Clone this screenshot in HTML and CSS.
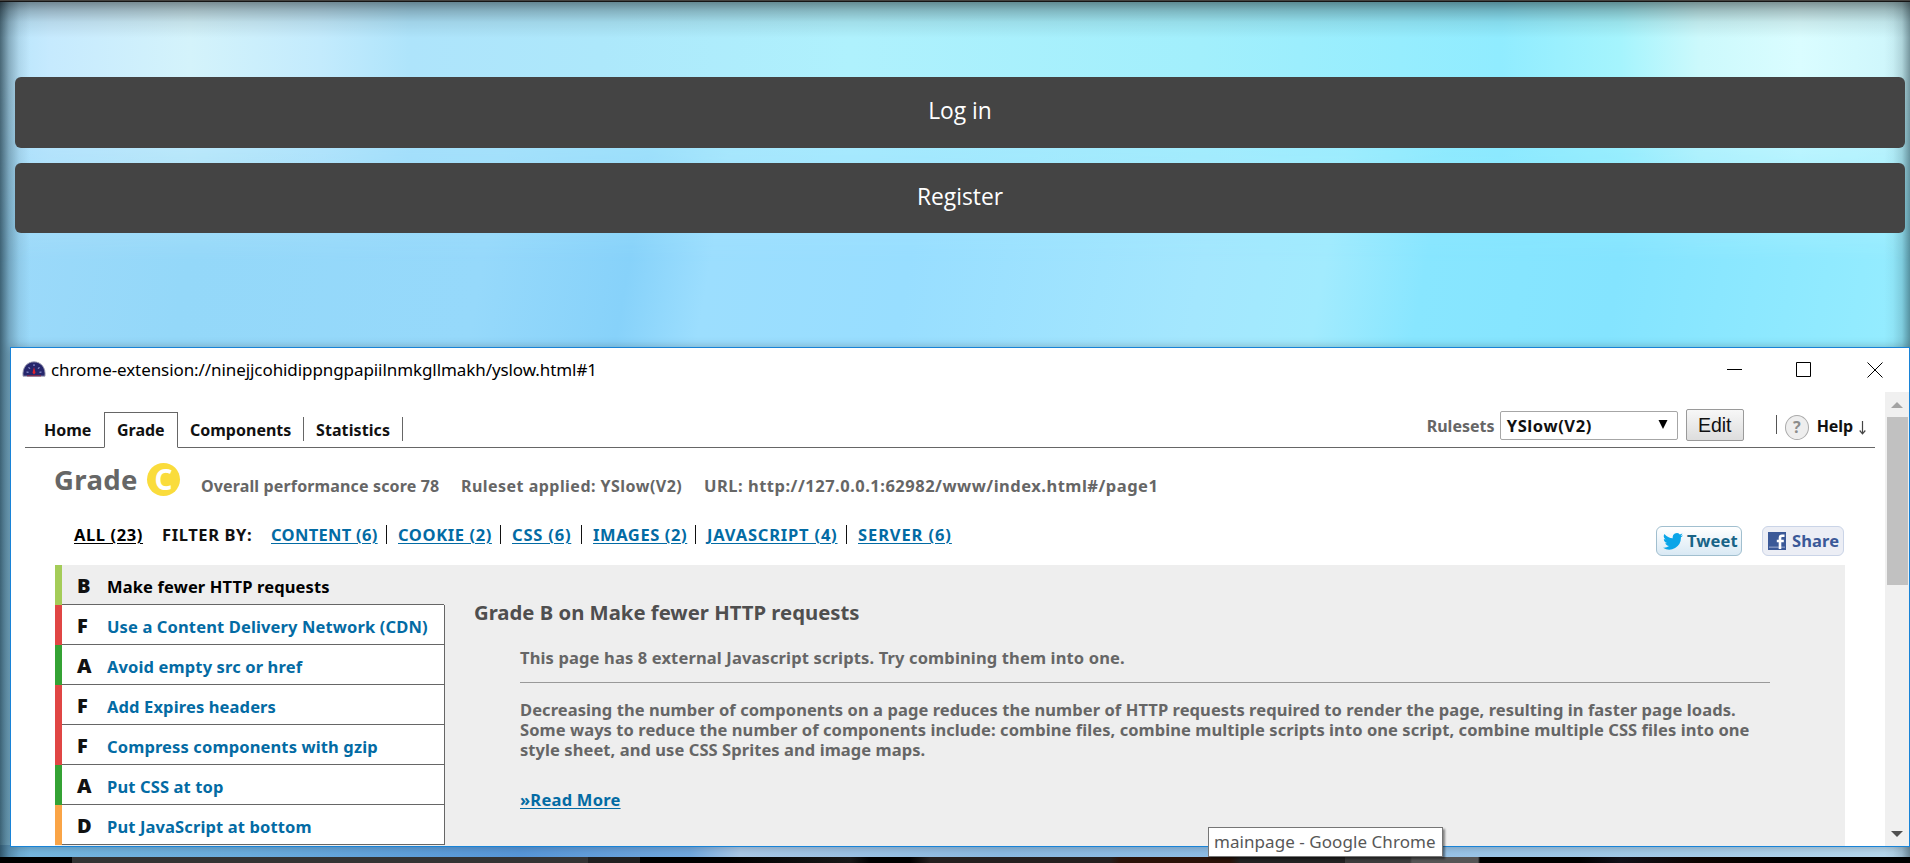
FILE: index.html
```
<!DOCTYPE html>
<html lang="en">
<head>
<meta charset="utf-8">
<title>mainpage</title>
<link rel="stylesheet" href="styles.css">
</head>
<body>
<div class="top-edge"></div>
<main class="app">
  <button class="app-btn">Log in</button>
  <button class="app-btn app-btn-second">Register</button>
</main>
<footer class="taskbar"></footer>

<section class="window">
  <header class="titlebar">
    <svg class="favicon" width="24" height="16" viewBox="0 0 24 19" preserveAspectRatio="none">
      <path d="M1 18C0 8 5 1 12 1s12 7 11 17Z" fill="#26266c" stroke="#a3a3b5" stroke-width="1"/>
      <path d="M4.500 13l2 .5M6.500 7.500l1.500 1.500M12 4v2M17.500 7.500L16 9M19.500 13l-2 .5" stroke="#8f93cf" stroke-width="1.300"/>
      <path d="M12 7l1.500 7-1.500 2-1.500-2Z" fill="#e0202c"/>
      <path d="M5 17.500h14" stroke="#7a2a4d" stroke-width="1.500"/>
    </svg>
    <span class="title">chrome-extension://ninejjcohidippngpapiilnmkgllmakh/yslow.html#1</span>
    <svg class="win-controls" width="156" height="16" viewBox="0 0 156 16" fill="none" stroke="#000" stroke-width="1">
      <path d="M0 7.500h15" /><path d="M69.500.5h14v14h-14Z"/><path d="M140.500.5l15 15M155.500.5l-15 15"/>
    </svg>
  </header>
  <div class="viewport">
    <div class="page">
      <nav class="tabs">
        <span class="tab-lead"></span>
        <a class="tab tab-home">Home</a>
        <a class="tab tab-active">Grade</a>
        <a class="tab tab-comp">Components</a>
        <a class="tab tab-stat">Statistics</a>
        <div class="tools">
          <span class="rules-label">Rulesets</span>
          <span class="select"><span>YSlow(V2)</span><svg width="10" height="9" viewBox="0 0 10 9"><path d="M.5 0h9L5 9Z" fill="#000"/></svg></span>
          <button class="edit">Edit</button>
          <i class="help-sep"></i>
          <span class="help-icon">?</span>
          <span class="help">Help</span>
          <svg class="help-arrow" width="7" height="14" viewBox="0 0 7 14" fill="none" stroke="#444" stroke-width="1.200"><path d="M3.500 0v12.500M.7 9.500l2.800 3.300 2.800-3.300"/></svg>
        </div>
      </nav>
      <div class="summary">
        <span class="grade-word">Grade</span>
        <span class="grade-badge">C</span>
        <span class="score">Overall performance score 78</span>
        <span class="ruleset">Ruleset applied: YSlow(V2)</span>
        <span class="url">URL: http://127.0.0.1:62982/www/index.html#/page1</span>
      </div>
      <div class="filters">
        <a class="f-all">ALL (23)</a>
        <span class="f-by">FILTER BY:</span>
        <a class="f f-content">CONTENT (6)</a><i></i>
        <a class="f f-cookie">COOKIE (2)</a><i></i>
        <a class="f f-css">CSS (6)</a><i></i>
        <a class="f f-images">IMAGES (2)</a><i></i>
        <a class="f f-js">JAVASCRIPT (4)</a><i></i>
        <a class="f f-server">SERVER (6)</a>
        <div class="share">
          <a class="tweet"><svg width="20" height="17" viewBox="0 0 24 20"><path d="M24 2.400a9.800 9.800 0 0 1-2.800.8A4.900 4.900 0 0 0 23.300.4a9.900 9.900 0 0 1-3.100 1.200 4.900 4.900 0 0 0-8.400 4.500A14 14 0 0 1 1.700 1a4.900 4.900 0 0 0 1.500 6.500 4.900 4.900 0 0 1-2.200-.6 4.900 4.900 0 0 0 3.900 4.900 4.900 4.900 0 0 1-2.200.1 4.900 4.900 0 0 0 4.600 3.400A9.900 9.900 0 0 1 0 17.400a14 14 0 0 0 21.500-12.500A10 10 0 0 0 24 2.400Z" fill="#0aa5e8"/></svg><span>Tweet</span></a>
          <a class="fb"><svg width="18" height="18" viewBox="0 0 18 18"><path d="M0 0h18v18H0Z" fill="#3b5998"/><path d="M1 15.200h16" stroke="#7f93c0" stroke-width="1.500"/><path d="M12 17V5.800q0-2 2-2h2.500M8.800 9h7" stroke="#fff" stroke-width="2.600" fill="none"/></svg><span>Share</span></a>
        </div>
      </div>
      <div class="report">
        <ul class="rules">
          <li class="selected gb"><b>B</b><a>Make fewer HTTP requests</a></li>
          <li class="gf"><b>F</b><a>Use a Content Delivery Network (CDN)</a></li>
          <li class="ga"><b>A</b><a>Avoid empty src or href</a></li>
          <li class="gf"><b>F</b><a>Add Expires headers</a></li>
          <li class="gf"><b>F</b><a>Compress components with gzip</a></li>
          <li class="ga"><b>A</b><a>Put CSS at top</a></li>
          <li class="gd"><b>D</b><a>Put JavaScript at bottom</a></li>
        </ul>
        <article class="detail">
          <h2>Grade B on Make fewer HTTP requests</h2>
          <p class="finding">This page has 8 external Javascript scripts. Try combining them into one.</p>
          <p class="explain">Decreasing the number of components on a page reduces the number of HTTP requests required to render the page, resulting in faster page loads.<br>Some ways to reduce the number of components include: combine files, combine multiple scripts into one script, combine multiple CSS files into one<br>style sheet, and use CSS Sprites and image maps.</p>
          <a class="more">»Read More</a>
        </article>
      </div>
    </div>
    <div class="scrollbar">
      <svg width="12" height="6" viewBox="0 0 12 6"><path d="M0 6L6 0l6 6Z" fill="#a3a3a3"/></svg>
      <div class="thumb"></div>
      <svg class="down" width="12" height="6" viewBox="0 0 12 6"><path d="M0 0l6 6 6-6Z" fill="#505050"/></svg>
    </div>
  </div>
</section>
<div class="tooltip">mainpage - Google Chrome</div>
</body>
</html>
```
FILE: styles.css
```
* { box-sizing: border-box; }
html, body { height: 100%; }
body {
  margin: 0;
  overflow: hidden;
  display: flex;
  flex-direction: column;
  position: relative;
  font: 700 16px/20px "Noto Sans", "Open Sans", sans-serif;
  color: #666;
}
.top-edge { height: 2px; background: #45423f; border-bottom: 1px solid #151515; flex: none; }
.app {
  flex: 1;
  padding: 75px 5px 0 15px;
  display: flex;
  flex-direction: column;
  gap: 15px;
  position: relative;
  isolation: isolate;
  background:
    linear-gradient(90deg, rgba(0,20,30,.6), rgba(0,20,30,.27) 9px, rgba(0,20,30,.08) 19px, transparent 30px),
    linear-gradient(270deg, rgba(0,20,30,.42), rgba(0,20,30,.15) 8px, rgba(0,20,30,.04) 17px, transparent 26px),
    linear-gradient(90deg, #77b8e0 0, #6badde 250px, #5797d9 520px, #72a9df 690px, #a9c8e7 740px, #8bbbe2 1000px, #91bfe7 1300px, #a6cde9 1700px, #b9d9ee 1910px) 0 100% / 100% 12px no-repeat,
    linear-gradient(100deg, #9edafa 0, #94d8f9 230px, #96d9fb 520px, #87d2fa 665px, #9cdefe 745px, #98deff 940px, #a4e7fe 1230px, #a2ebfe 1350px, #88e6ff 1450px, #84e4ff 1640px, #96edff 1950px);
}
.app::before {
  content: "";
  position: absolute;
  inset: 0 0 auto;
  height: 260px;
  z-index: -1;
  background:
    linear-gradient(rgba(0,0,0,.42), rgba(0,0,0,.23) 9px, rgba(0,0,0,.08) 20px, transparent 36px),
    linear-gradient(90deg, rgba(0,20,30,.6), rgba(0,20,30,.27) 9px, rgba(0,20,30,.08) 19px, transparent 30px),
    linear-gradient(270deg, rgba(0,20,30,.42), rgba(0,20,30,.15) 8px, rgba(0,20,30,.04) 17px, transparent 26px),
    linear-gradient(90deg, #b6e4fb 0, #c6eafe 50px, #d4f3fb 190px, #c3ebfd 320px, #aee4fb 410px, #ade8fb 600px, #aff1fd 850px, #a2effc 1200px, #90ecff 1500px, #a5f4fd 1620px, #ccf9fc 1700px, #dafdff 1800px, #ccf5fb 1910px);
  mask-image: linear-gradient(#000 70px, transparent 260px);
}
.app-btn {
  height: 71px;
  padding: 0 0 3px;
  border: 0;
  border-radius: 6px;
  background: #444;
  color: #fff;
  font: 400 22.800px/30px "Open Sans", "Noto Sans", sans-serif;
}
.app-btn-second { height: 70px; }
.taskbar {
  height: 6px;
  flex: none;
  background: linear-gradient(90deg, #000 72px, #333 72px 588px, #202020 588px 640px, #000 640px 730px, #181818 850px, #000 870px 910px, #24201f 930px 1110px, #2a1208 1120px 1230px, #222 1240px 1345px, #3c3c3c 1345px 1410px, #555 1412px 1478px, #000 1480px 1580px, #101018 1620px, #0c0400 1700px, #000 1780px);
}
.window {
  position: absolute;
  left: 10px;
  top: 347px;
  width: 1900px;
  height: 500px;
  border: 1px solid #1883d7;
  background: #fff;
  box-shadow: 0 0 9px rgba(0,0,0,.25);
  display: flex;
  flex-direction: column;
  overflow: hidden;
}
.titlebar { height: 44px; flex: none; display: flex; align-items: flex-start; padding: 14px 26px 0 11px; }
.favicon { margin-right: 5px; margin-top: -1px; }
.title { font-weight: 400; font-size: 17px; line-height: 20px; letter-spacing: -.08px; color: #000; white-space: nowrap; margin-top: -2px; }
.win-controls { margin-left: auto; }
.viewport { flex: 1; display: flex; min-height: 0; }
.page { flex: 1; min-width: 0; padding: 20px 10px 0 14px; }

.tabs { height: 36px; display: flex; border-bottom: 1px solid #666; color: #111; }
.tab { height: 35px; line-height: 20px; padding-top: 8px; }
.tab-lead { width: 19px; }
.tab-home { width: 60px; }
.tab-active { width: 74px; height: 36px; border: 1px solid #666; border-bottom-color: #fff; background: #fff; padding: 7px 0 0 12px; }
.tab-comp, .tab-stat { height: 24px; margin-top: 5px; padding: 3px 0 0 12px; border-right: 1px solid #666; }
.tab-comp { width: 126px; }
.tab-stat { width: 99px; letter-spacing: .09px; }
.tools { margin-left: auto; display: flex; align-items: flex-start; padding-right: 9px; }
.tools > * { flex: none; }
.rules-label { width: 73px; margin-top: 4px; color: #666; }
.select { width: 178px; height: 29px; margin-top: -1px; border: 1px solid #a6a6a6; border-radius: 2px; display: flex; justify-content: space-between; align-items: center; padding: 1px 9px 0 6px; font-size: 16.500px; letter-spacing: .6px; }
.select svg { margin-top: -3px; }
.edit { width: 58px; height: 32px; margin: -3px 0 0 8px; padding: 0; border: 1px solid #9a9a9a; border-radius: 2px; background: linear-gradient(#f7f7f7, #ddd); font: 400 19.500px/24px "Liberation Sans", sans-serif; color: #111; }
.help-sep { width: 1px; height: 19px; margin: 3px 8px 0 32px; background: #555; }
.help-icon { width: 24px; height: 25px; margin-top: 3px; border: 1px solid #aaa; border-radius: 50%; background: #eee; color: #8c8c8c; text-align: center; line-height: 22px; }
.help { margin: 4px 6px 0 8px; letter-spacing: -.1px; }
.help-arrow { margin-top: 9px; }

.summary { height: 59px; display: flex; align-items: flex-start; padding: 12px 0 0 29px; white-space: nowrap; }
.grade-word { width: 93px; font-size: 27.500px; line-height: 40px; letter-spacing: .4px; }
.grade-badge { width: 33px; height: 33px; margin-top: 3px; border-radius: 50%; background: #fadc3c; color: #fff; font-size: 28px; line-height: 32px; text-align: center; }
.score, .ruleset, .url { margin-top: 16px; }
.score { margin-left: 21px; width: 260px; letter-spacing: .14px; }
.ruleset { width: 243px; letter-spacing: .47px; }
.url { font-size: 16.500px; letter-spacing: .5px; }

.filters { height: 58px; display: flex; align-items: flex-start; padding: 18px 31px 0 49px; white-space: nowrap; color: #111; font-size: 16.500px; }
.filters > a { text-decoration: underline; text-underline-offset: 2px; text-decoration-thickness: 1px; }
.filters > a, .f-by { flex: none; }
.filters > i { width: 1px; height: 19px; margin: 0 11px 0 8px; background: #111; }
.f-all { width: 88px; letter-spacing: .6px; color: #000; }
.f-by { width: 109px; letter-spacing: .6px; }
.f { color: #036ba4; }
.f-content { width: 107px; letter-spacing: .3px; }
.f-cookie { width: 94px; letter-spacing: .6px; }
.f-css { width: 61px; letter-spacing: .8px; }
.f-images { width: 94px; letter-spacing: .6px; }
.f-js { width: 131px; letter-spacing: .8px; }
.f-server { width: 94px; letter-spacing: .9px; }
.share { margin-left: auto; display: flex; gap: 20px; margin-top: 1px; }
.share a { height: 30px; border-radius: 6px; display: flex; align-items: center; gap: 4px; letter-spacing: .1px; }
.tweet { width: 86px; padding-left: 6px; border: 1px solid #a1bfcf; background: linear-gradient(#fff, #d9e9f4); color: #186487; }
.fb { width: 82px; padding-left: 5px; border: 1px solid #cad4e7; background: #eceef5; color: #3b5998; }
.fb svg { margin-right: 2px; }

.report { margin: 0 30px; height: 290px; background: #eee; display: flex; }
.rules { list-style: none; margin: 0; padding: 0; width: 390px; flex: none; }
.rules li { height: 40px; border-left: 7px solid; border-right: 1px solid #666; background: #fff; display: flex; padding-top: 12px; box-shadow: inset 0 -1px #666; white-space: nowrap; }
.rules b { width: 45px; padding-left: 15px; font-size: 20px; line-height: 18px; color: #111; }
.rules a { color: #036ba4; font-size: 16.500px; letter-spacing: .13px; }
.rules .selected { background: #eee; border-right-color: #eee; }
.rules .selected a { color: #000; }
.gb { border-left-color: #a4cc58 !important; }
.gf { border-left-color: #e04644 !important; }
.ga { border-left-color: #34a234 !important; }
.gd { border-left-color: #faa446 !important; }
.detail { flex: 1; padding: 37px 75px 0 29px; white-space: nowrap; }
.detail h2 { margin: 0; font-size: 20.300px; line-height: 20px; color: #4f4f4f; }
.finding { margin: 26px 0 0 46px; height: 35px; border-bottom: 1px solid #999; font-size: 16.500px; letter-spacing: .14px; }
.explain { margin: 17px 0 0 46px; font-size: 16.500px; letter-spacing: .07px; }
.more { display: block; margin: 30px 0 0 46px; color: #036ba4; font-size: 16.500px; letter-spacing: .24px; text-decoration: underline; text-underline-offset: 2px; text-decoration-thickness: 1px; }

.scrollbar { width: 24px; flex: none; background: #f0f0f0; display: flex; flex-direction: column; align-items: center; padding: 10px 0 9px; }
.thumb { width: 21px; height: 168px; margin-top: 9px; background: #c1c1c1; }
.scrollbar .down { margin-top: auto; }
.tooltip {
  position: absolute;
  left: 1208px;
  top: 827px;
  width: 235px;
  height: 30px;
  padding: 3px 0 0 5px;
  border: 1px solid #767676;
  background: #fff;
  box-shadow: 2px 2px 2px rgba(0,0,0,.45);
  color: #575757;
  font: 400 17px/22px "Noto Sans", sans-serif;
  letter-spacing: .06px;
  white-space: nowrap;
}
```
